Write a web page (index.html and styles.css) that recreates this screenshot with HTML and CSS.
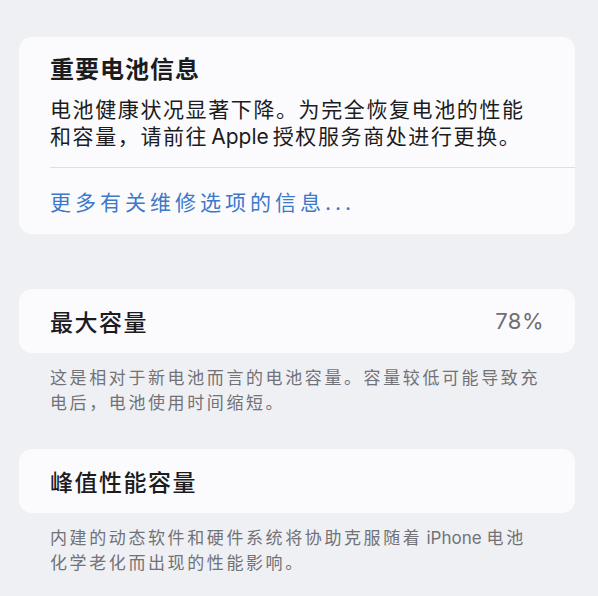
FILE: index.html
```html
<!DOCTYPE html>
<html lang="zh-CN">
<head>
    <meta charset="UTF-8">
    <meta name="viewport" content="width=device-width, initial-scale=1.0">
    <title>电池健康</title>
    <link rel="stylesheet" href="styles.css">
</head>
<body>
    <div class="page">
        <div class="card notice">
            <h2 class="notice-title">重要电池信息</h2>
            <p class="notice-text">
                <span class="line">电池健康状况显著下降。为完全恢复电池的性能</span>
                <span class="line">和容量，请前往<span class="latin">Apple</span>授权服务商处进行更换。</span>
            </p>
            <div class="divider"></div>
            <a class="notice-link" href="#">更多有关维修选项的信息...</a>
        </div>

        <div class="section">
            <div class="card row">
                <span class="row-label">最大容量</span>
                <span class="row-value">78%</span>
            </div>
            <p class="footnote">
                <span class="line">这是相对于新电池而言的电池容量。容量较低可能导致充</span>
                <span class="line">电后，电池使用时间缩短。</span>
            </p>
        </div>

        <div class="section">
            <div class="card row">
                <span class="row-label">峰值性能容量</span>
            </div>
            <p class="footnote">
                <span class="line">内建的动态软件和硬件系统将协助克服随着<span class="latin">iPhone</span>电池</span>
                <span class="line">化学老化而出现的性能影响。</span>
            </p>
        </div>
    </div>
</body>
</html>
```

FILE: styles.css
```css
body {
    margin: 0;
    background-color: #eff0f4;
    font-family: "Inter", "Noto Sans CJK SC", sans-serif;
    color: #1c1c1e;
}
.page {
    padding: 37px 23px 0 19px;
}
.card {
    background-color: #fbfbfd;
    border-radius: 13px;
}
.notice {
    padding: 18px 0 18px 31px;
}
.notice-title {
    margin: 0;
    font-size: 24px;
    line-height: 30px;
    font-weight: 700;
    letter-spacing: 1px;
}
.notice-text {
    margin: 12px 31px 0 0;
    font-size: 21px;
    line-height: 26.5px;
    letter-spacing: 1.6px;
}
/* each line of the settings copy breaks where the system put it */
.line {
    display: block;
    white-space: nowrap;
}
/* latin words inside chinese text keep their own spacing */
.latin {
    letter-spacing: 0;
    margin: 0 4px 0 3px;
}
.divider {
    height: 1px;
    margin-top: 17px;
    background-color: #dedee3;
}
.notice-link {
    display: block;
    margin-top: 22px;
    font-size: 21px;
    line-height: 26px;
    letter-spacing: 4px;
    color: #3c79cb;
    text-decoration: none;
}
.section {
    margin-top: 55px;
}
.section + .section {
    margin-top: 33px;
}
.row {
    display: flex;
    justify-content: space-between;
    align-items: center;
    height: 64px;
    padding: 0 31px;
}
.row-label {
    font-size: 23px;
    font-weight: 500;
    letter-spacing: 1.5px;
}
.row-value {
    font-size: 22px;
    color: #6e6e73;
    letter-spacing: 0.5px;
}
.footnote {
    margin: 13px 31px 0;
    font-size: 17px;
    line-height: 25px;
    letter-spacing: 2.6px;
    color: #727277;
}
.footnote .latin {
    margin: 0 5px 0 4px;
}
```
